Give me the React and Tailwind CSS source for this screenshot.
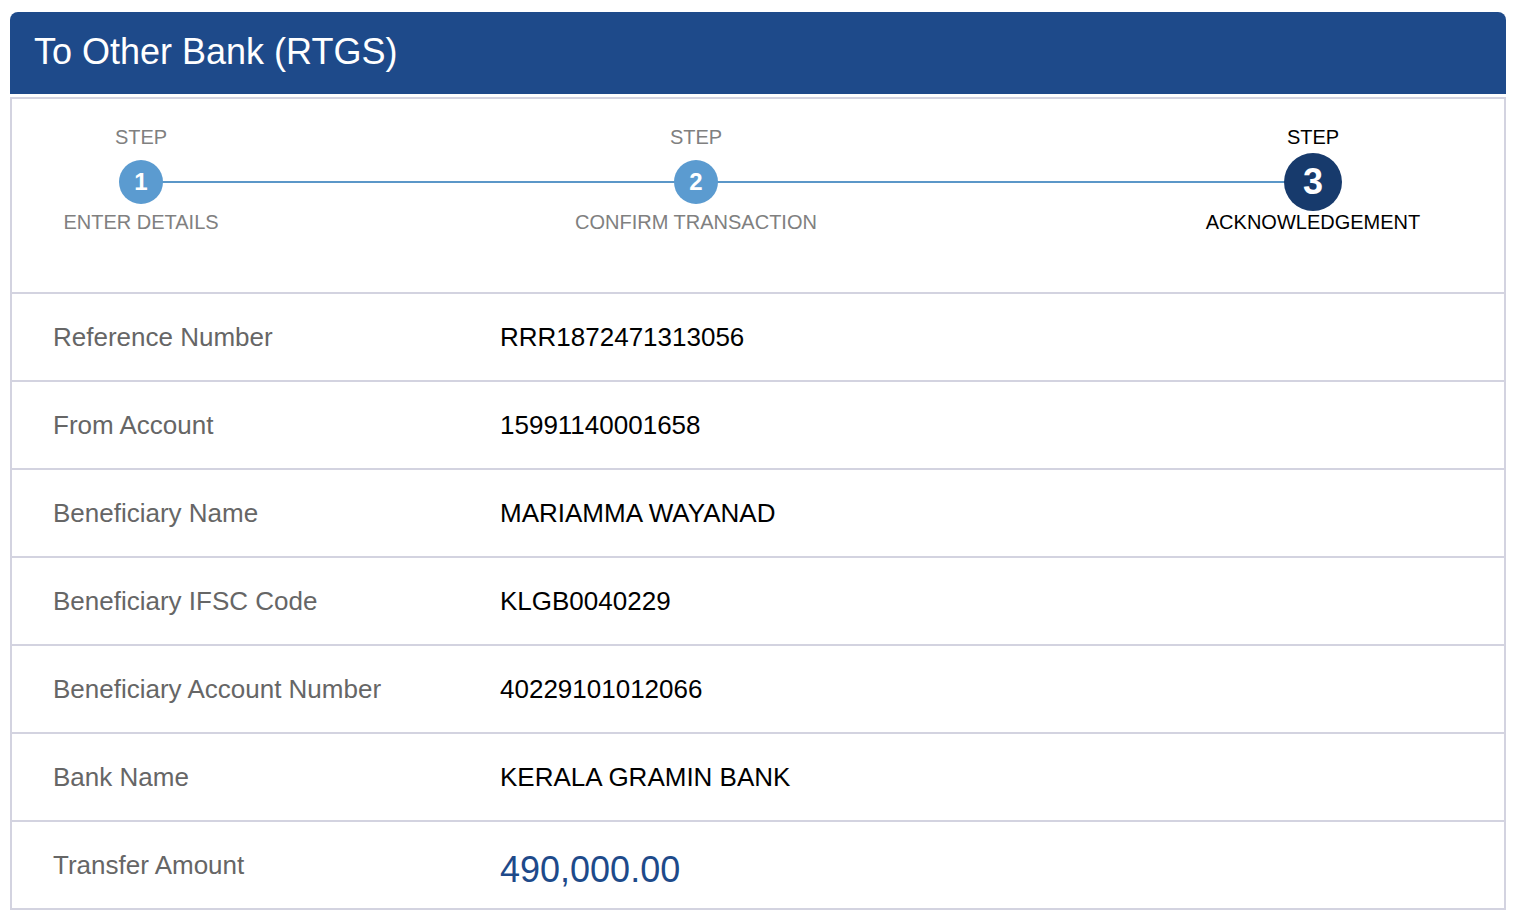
import React from 'react';

const steps = [
  { n: 1, label: 'ENTER DETAILS', width: 'w-[258px]' },
  { n: 2, label: 'CONFIRM TRANSACTION', width: 'w-[852px]' },
  { n: 3, label: 'ACKNOWLEDGEMENT', width: 'flex-1', active: true },
];

const rows = [
  ['Reference Number', 'RRR1872471313056'],
  ['From Account', '15991140001658'],
  ['Beneficiary Name', 'MARIAMMA WAYANAD'],
  ['Beneficiary IFSC Code', 'KLGB0040229'],
  ['Beneficiary Account Number', '40229101012066'],
  ['Bank Name', 'KERALA GRAMIN BANK'],
];

const Step = ({ n, label, width, active }) => (
  <div className={`${width} flex flex-col items-center`}>
    <div className={`text-[20px] leading-[24px] h-[24px] ${active ? 'text-black' : 'text-[#808080]'}`}>STEP</div>
    <div className="h-[60px] mt-[3px] flex items-center justify-center">
      {active ? (
        <div className="relative z-10 w-[58px] h-[58px] rounded-full bg-[#173a6c] flex items-center justify-center text-white font-bold text-[36px] leading-none">
          {n}
        </div>
      ) : (
        <div className="relative z-10 w-[44px] h-[44px] rounded-full bg-[#5b9bd0] flex items-center justify-center text-white font-bold text-[24px] leading-none">
          {n}
        </div>
      )}
    </div>
    <div className={`text-[20px] leading-[24px] -mt-[2px] ${active ? 'text-black' : 'text-[#808080]'}`}>{label}</div>
  </div>
);

export default function App() {
  return (
    <div className="w-[1524px] h-[914px] overflow-hidden bg-white pt-[12px] pl-[10px] pr-[18px] font-['Liberation_Sans',Arial,sans-serif]">
      {/* Encabezado */}
      <div className="h-[82px] bg-[#1e4a8a] rounded-t-[8px] flex items-center pl-[24px] pb-[2px]">
        <h1 className="text-[36px] text-white leading-none">To Other Bank (RTGS)</h1>
      </div>

      <div className="mt-[3px] border-2 border-b-0 border-[#d3d3e0]">
        {/* Pasos */}
        <div className="relative flex pt-[26px] h-[195px] border-b-2 border-[#d3d3e0]">
          <div className="absolute left-[129px] w-[1172px] top-[82px] h-[2px] bg-[#5b97c8]" />
          {steps.map((s) => (
            <Step key={s.n} {...s} />
          ))}
        </div>

        {rows.map(([label, value]) => (
          <div key={label} className="flex items-center h-[88px] border-b-2 border-[#d3d3e0]">
            <div className="w-[488px] pl-[41px] text-[26px] text-[#666666]">{label}</div>
            <div className="text-[26px] text-black">{value}</div>
          </div>
        ))}

        <div className="flex items-center h-[88px] border-b-2 border-[#d3d3e0]">
          <div className="w-[488px] pl-[41px] text-[26px] text-[#666666]">Transfer Amount</div>
          <div className="text-[36px] text-[#1e4a8a] mt-[10px]">490,000.00</div>
        </div>
      </div>
    </div>
  );
}
